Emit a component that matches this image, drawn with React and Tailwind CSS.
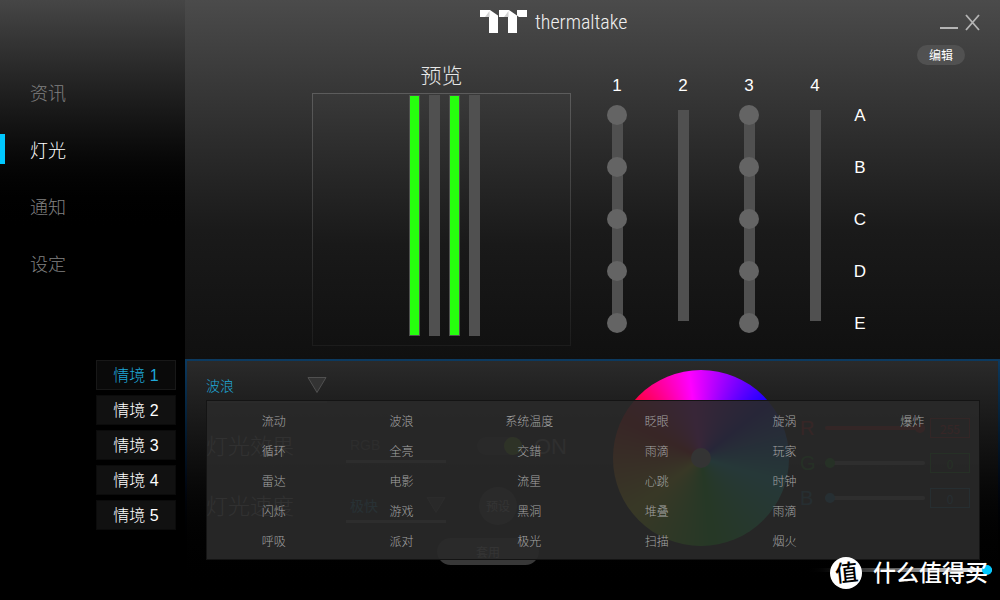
import { useState } from "react";

const navItems = ["资讯", "灯光", "通知", "设定"];
const scenes = ["情境 1", "情境 2", "情境 3", "情境 4", "情境 5"];
const zones = ["A", "B", "C", "D", "E"];
const strips = [
  { id: 1, active: true },
  { id: 2, active: false },
  { id: 3, active: true },
  { id: 4, active: false },
];

// one array per column of the effect menu
const effects = [
  ["流动", "循环", "雷达", "闪烁", "呼吸"],
  ["波浪", "全亮", "电影", "游戏", "派对"],
  ["系统温度", "交錯", "流星", "黑洞", "极光"],
  ["眨眼", "雨滴", "心跳", "堆叠", "扫描"],
  ["旋涡", "玩家", "时钟", "雨滴", "烟火"],
  ["爆炸"],
];

const channels = [
  {
    name: "R",
    value: 255,
    text: "text-[#e00000]",
    box: "border-[#b00000] text-[#e00000]",
    range: "bg-[#c80000] [&::-webkit-slider-thumb]:bg-[#c80000]",
  },
  {
    name: "G",
    value: 0,
    text: "text-[#009000]",
    box: "border-[#009000] text-[#009000]",
    range: "bg-[#747474] [&::-webkit-slider-thumb]:bg-[#00a000]",
  },
  {
    name: "B",
    value: 0,
    text: "text-[#0070a0]",
    box: "border-[#0070a0] text-[#0070a0]",
    range: "bg-[#747474] [&::-webkit-slider-thumb]:bg-[#0080b0]",
  },
];

const Triangle = () => (
  <svg width="20" height="16" viewBox="0 0 20 16" className="shrink-0">
    <path d="M1 .5H19L10 15.5Z" fill="#333" stroke="#505050" />
  </svg>
);

const Logo = () => (
  <div className="flex items-start gap-2 pt-2.5">
    <svg width="47" height="24" viewBox="0 0 47 24">
      <path
        d="M0 0H10L18 5.5V23H9V7H0Z M19 0H29L37 5.5V23H28V7H19Z M37 0H47V7H39L37 5.5Z"
        fill="#fff"
      />
      <path d="M5 7L9.500 1V7Z M24 7L28.500 1V7Z" fill="#d2d2d2" />
    </svg>
    <span className="font-['Liberation_Sans_Narrow','Roboto_Condensed',Roboto,sans-serif] text-xl leading-6 font-light text-[#f0f0f0]">
      thermaltake
    </span>
  </div>
);

const Sidebar = ({ page, setPage, scene, setScene }) => (
  <aside className="flex w-[185px] shrink-0 flex-col bg-linear-to-b from-[#464646] to-black to-[240px] pt-[77px]">
    <nav className="flex flex-col gap-[27px]">
      {navItems.map((item) => (
        <a
          key={item}
          href="#"
          onClick={() => setPage(item)}
          className={
            page === item
              ? "relative pl-[30px] text-lg leading-[30px] font-light text-white before:absolute before:inset-y-0 before:left-0 before:w-[5px] before:bg-[#00c8ff]"
              : "pl-[30px] text-lg leading-[30px] font-light text-[#808080]"
          }
        >
          {item}
        </a>
      ))}
    </nav>
    <div className="mt-[82px] flex flex-col items-end gap-[5px] pr-[9px] font-['Liberation_Sans','Noto_Sans_CJK_SC',sans-serif]">
      {scenes.map((item) => (
        <button
          key={item}
          onClick={() => setScene(item)}
          className={
            scene === item
              ? "h-[30px] w-20 border border-[#181818] bg-[#0a0a0a] pt-0.5 text-base leading-6 font-light text-[#1fa8d9]"
              : "h-[30px] w-20 border border-[#0b0b0b] bg-[#111] pt-0.5 text-base leading-6 font-light text-white"
          }
        >
          {item}
        </button>
      ))}
    </div>
  </aside>
);

const Preview = () => (
  <section className="w-[259px]">
    <h2 className="text-center text-[21px] leading-[18px] font-light text-[#e8e8e8]">
      预览
    </h2>
    <div className="mt-2.5 h-[253px] bg-linear-to-b from-[#5c5c5c] to-[#1c1c1c] p-px">
      <div className="flex h-full gap-[9px] bg-linear-to-b from-[#393939] from-0% via-[#191919] via-60% to-[#111] pt-px pl-24">
        {strips.map((strip) => (
          <div
            key={strip.id}
            className={
              strip.active
                ? "h-[241px] w-[11px] border border-[#505050] bg-[#26ff0e]"
                : "h-[241px] w-[11px] bg-[#505050]"
            }
          />
        ))}
      </div>
    </div>
  </section>
);

const Strips = () => (
  <section className="mt-[11px] ml-[13px] flex font-['Liberation_Sans',sans-serif] text-[17px] leading-5 text-white">
    {strips.map((strip) => (
      <div key={strip.id} className="w-[66px]">
        <p className="mb-[9px] text-center">{strip.id}</p>
        <div className="grid justify-items-center">
          <div className="col-start-1 row-start-1 mt-[5px] h-[211px] w-[11px] bg-[#505050]" />
          {strip.active && (
            <div className="col-start-1 row-start-1 flex flex-col gap-8">
              {zones.map((zone) => (
                <button
                  key={zone}
                  aria-label={`${strip.id}${zone}`}
                  className="size-5 rounded-full bg-[#646464]"
                />
              ))}
            </div>
          )}
        </div>
      </div>
    ))}
    <div className="mt-[30px] flex w-6 flex-col gap-8 text-center">
      {zones.map((zone) => (
        <span key={zone}>{zone}</span>
      ))}
    </div>
  </section>
);

const EffectMenu = ({ onPick }) => (
  <div className="absolute top-[39px] right-[18px] left-[19px] grid h-40 grid-cols-6 border border-[#141414] bg-[#292929]/93 px-[3px] pt-[5px]">
    {effects.map((column, i) => (
      <div key={i} className="flex flex-col">
        {column.map((effect) => (
          <button
            key={effect}
            onClick={() => onPick(effect)}
            className="h-[30px] text-xs font-light text-[#a4a4a4]"
          >
            {effect}
          </button>
        ))}
      </div>
    ))}
  </div>
);

const LightForm = ({ effect, open, setOpen }) => (
  <div className="flex w-[407px] shrink-0 flex-col">
    <button
      aria-expanded={open}
      onClick={() => setOpen(!open)}
      className="mt-1.5 flex h-9 w-[121px] items-center justify-between border-b-2 border-[#3a3a3a] pt-0.5 text-sm font-light text-[#1fa8d9]"
    >
      {effect}
      <Triangle />
    </button>
    <div className="mt-[13px] flex h-[60px] items-center">
      <label
        htmlFor="mode"
        className="w-[140px] pb-1 text-[22px] font-light text-[#a0a0a0]"
      >
        灯光效果
      </label>
      <select
        id="mode"
        className="h-[34px] w-[100px] appearance-none border-b-3 border-[#606060] pl-1 font-['Liberation_Sans',sans-serif] text-sm text-[#606060]"
      >
        <option>RGB</option>
      </select>
      <input
        id="power"
        type="checkbox"
        defaultChecked
        className="ml-[31px] flex h-[18px] w-[45px] appearance-none justify-end rounded-full bg-[#303030] after:size-[18px] after:rounded-full after:bg-[#78b414]"
      />
      <label
        htmlFor="power"
        className="ml-3 font-['Liberation_Sans',sans-serif] text-[22px] text-[#808080]"
      >
        ON
      </label>
    </div>
    <div className="flex h-[60px] items-center">
      <label
        htmlFor="speed"
        className="w-[140px] pb-1 text-[22px] font-light text-[#a0a0a0]"
      >
        灯光速度
      </label>
      <div className="flex h-[34px] w-[100px] items-center border-b-3 border-[#606060]">
        <select
          id="speed"
          className="min-w-0 flex-1 appearance-none pl-1 text-sm text-[#1f9cc9]"
        >
          <option>极快</option>
        </select>
        <Triangle />
      </div>
      <button className="ml-[33px] size-[38px] rounded-full bg-[#3c3c3c] text-xs text-[#c0c0c0]">
        预设
      </button>
    </div>
    <button className="mt-0.5 ml-[231px] h-[27px] w-[102px] rounded-full bg-[#383838] text-xs text-[#c0c0c0]">
      套用
    </button>
  </div>
);

const ColorWheel = () => (
  <div className="mt-[9px] flex size-[176px] shrink-0 items-center justify-center rounded-full bg-[conic-gradient(from_-8deg,#ff00ff,#1800ff_58deg,#00ffff_115deg,#00ff00_180deg,#ffff00_240deg,#ff0000_305deg,#ff00ff)]">
    <div className="size-5 rounded-full bg-[#c0c0c0]" />
  </div>
);

const ColorSliders = () => (
  <div className="mt-[57px] ml-[11px] flex w-[192px] shrink-0 flex-col gap-[15px]">
    {channels.map((channel) => (
      <div key={channel.name} className="flex h-5 items-center">
        <label
          htmlFor={channel.name}
          className={`w-[25px] font-['Liberation_Sans',sans-serif] text-xl ${channel.text}`}
        >
          {channel.name}
        </label>
        <input
          id={channel.name}
          type="range"
          max="255"
          defaultValue={channel.value}
          className={`h-1 w-[100px] appearance-none rounded-full [&::-webkit-slider-thumb]:size-2.5 [&::-webkit-slider-thumb]:appearance-none [&::-webkit-slider-thumb]:rounded-full ${channel.range}`}
        />
        <input
          type="text"
          aria-label={`${channel.name} value`}
          defaultValue={channel.value}
          className={`ml-[5px] h-5 w-10 border text-center text-xs ${channel.box}`}
        />
      </div>
    ))}
    <input
      type="range"
      aria-label="Brightness"
      defaultValue="100"
      className="mt-[45px] h-1 appearance-none rounded-full bg-linear-to-r from-black to-white [&::-webkit-slider-thumb]:size-2.5 [&::-webkit-slider-thumb]:appearance-none [&::-webkit-slider-thumb]:rounded-full [&::-webkit-slider-thumb]:bg-[#00c8ff]"
    />
  </div>
);

const Watermark = () => (
  <div className="pointer-events-none absolute right-3 bottom-[11px] flex items-start gap-[11px] text-white">
    <span className="flex size-8 items-center justify-center rounded-full bg-white text-[23px] leading-7 font-medium text-black">
      <span className="-rotate-6 pb-1">值</span>
    </span>
    <span className="text-[23px] leading-7 font-medium">什么值得买</span>
  </div>
);

const App = () => {
  const [page, setPage] = useState("灯光");
  const [scene, setScene] = useState("情境 1");
  const [effect, setEffect] = useState("波浪");
  const [open, setOpen] = useState(true);

  const pickEffect = (name) => {
    setEffect(name);
    setOpen(false);
  };

  return (
    <div className="relative flex min-h-screen overflow-hidden bg-black font-['Noto_Sans_CJK_SC',sans-serif]">
      <Sidebar
        page={page}
        setPage={setPage}
        scene={scene}
        setScene={setScene}
      />
      <main className="flex min-w-0 flex-1 flex-col bg-linear-to-b from-[#4b4b4b] via-[#1a1a1a] via-[230px] to-[#101010] to-[358px]">
        <header className="flex h-[45px] items-start justify-between pr-[19px] pl-[295px]">
          <Logo />
          <div className="flex gap-[7px] pt-[14px]">
            <button aria-label="Minimize">
              <svg width="19" height="18" viewBox="0 0 19 18">
                <path d="M1 14H19" stroke="#b4b4b4" strokeWidth="2" />
              </svg>
            </button>
            <button aria-label="Close">
              <svg width="16" height="18" viewBox="0 0 16 18">
                <path
                  d="M1 1L14 16M14 1L1 16"
                  stroke="#b4b4b4"
                  strokeWidth="1.8"
                />
              </svg>
            </button>
          </div>
        </header>
        <div className="flex justify-end pr-[35px]">
          <button className="h-5 w-12 rounded-full bg-[#515151] text-xs text-white">
            编辑
          </button>
        </div>
        <div className="flex pl-[127px]">
          <Preview />
          <Strips />
        </div>
        <div className="mt-[13px] flex flex-1 bg-linear-to-b from-[#0c3a60] to-black to-[200px] px-0.5 pt-0.5">
          <div className="relative flex flex-1 bg-linear-to-b from-[#2a2a2a] to-black pl-[19px]">
            <LightForm effect={effect} open={open} setOpen={setOpen} />
            <ColorWheel />
            <ColorSliders />
            {open && <EffectMenu onPick={pickEffect} />}
          </div>
        </div>
      </main>
      <Watermark />
    </div>
  );
};

export default App;
